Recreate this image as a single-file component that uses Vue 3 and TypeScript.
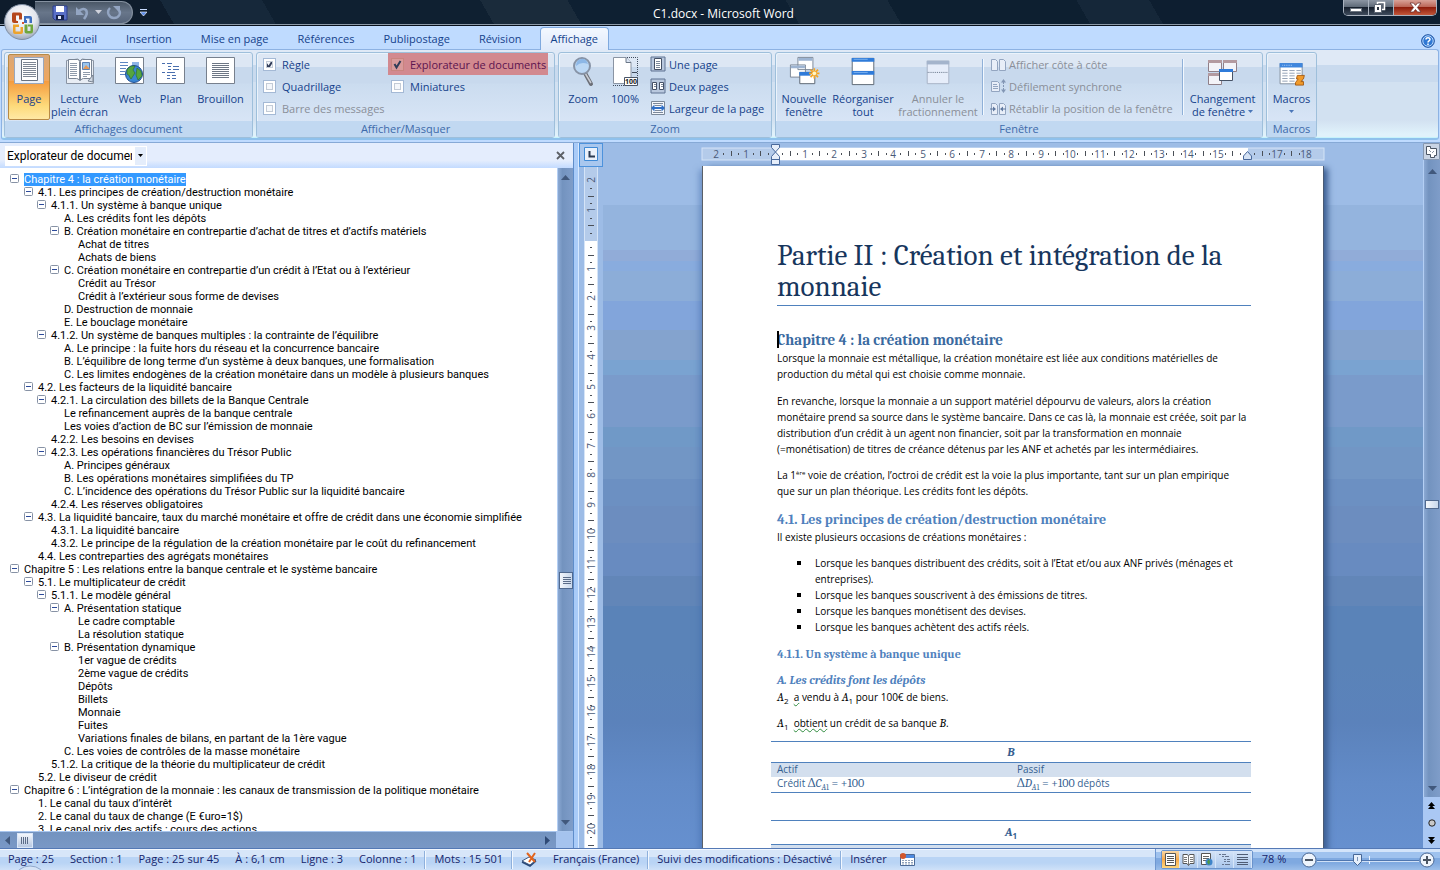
<script setup lang="ts">
import { ref } from 'vue'

interface Heading { level: number; text: string; open?: boolean }

const tabs = ['Accueil', 'Insertion', 'Mise en page', 'Références', 'Publipostage', 'Révision', 'Affichage']
const activeTab = ref('Affichage')
const selected = ref(0)
const zoom = ref(39)
const showRuler = ref(true)
const showGrid = ref(false)
const showMap = ref(true)
const showThumbs = ref(false)

const h = (level: number, text: string, open = false): Heading => ({ level, text, open })
const headings: Heading[] = [
  h(0, 'Chapitre 4 : la création monétaire', true),
  h(1, '4.1. Les principes de création/destruction monétaire', true),
  h(2, '4.1.1. Un système à banque unique', true),
  h(3, 'A. Les crédits font les dépôts'),
  h(3, 'B. Création monétaire en contrepartie d’achat de titres et d’actifs matériels', true),
  h(4, 'Achat de titres'),
  h(4, 'Achats de biens'),
  h(3, 'C. Création monétaire en contrepartie d’un crédit à l’Etat ou à l’extérieur', true),
  h(4, 'Crédit au Trésor'),
  h(4, 'Crédit à l’extérieur sous forme de devises'),
  h(3, 'D. Destruction de monnaie'),
  h(3, 'E. Le bouclage monétaire'),
  h(2, '4.1.2. Un système de banques multiples : la contrainte de l’équilibre', true),
  h(3, 'A. Le principe : la fuite hors du réseau et la concurrence bancaire'),
  h(3, 'B. L’équilibre de long terme d’un système à deux banques, une formalisation'),
  h(3, 'C. Les limites endogènes de la création monétaire dans un modèle à plusieurs banques'),
  h(1, '4.2. Les facteurs de la liquidité bancaire', true),
  h(2, '4.2.1. La circulation des billets de la Banque Centrale', true),
  h(3, 'Le refinancement auprès de la banque centrale'),
  h(3, 'Les voies d’action de BC sur l’émission de monnaie'),
  h(2, '4.2.2. Les besoins en devises'),
  h(2, '4.2.3. Les opérations financières du Trésor Public', true),
  h(3, 'A. Principes généraux'),
  h(3, 'B. Les opérations monétaires simplifiées du TP'),
  h(3, 'C. L’incidence des opérations du Trésor Public sur la liquidité bancaire'),
  h(2, '4.2.4. Les réserves obligatoires'),
  h(1, '4.3. La liquidité bancaire, taux du marché monétaire et offre de crédit dans une économie simplifiée', true),
  h(2, '4.3.1. La liquidité bancaire'),
  h(2, '4.3.2. Le principe de la régulation de la création monétaire par le coût du refinancement'),
  h(1, '4.4. Les contreparties des agrégats monétaires'),
  h(0, 'Chapitre 5 : Les relations entre la banque centrale et le système bancaire', true),
  h(1, '5.1. Le multiplicateur de crédit', true),
  h(2, '5.1.1. Le modèle général', true),
  h(3, 'A. Présentation statique', true),
  h(4, 'Le cadre comptable'),
  h(4, 'La résolution statique'),
  h(3, 'B. Présentation dynamique', true),
  h(4, '1er vague de crédits'),
  h(4, '2ème vague de crédits'),
  h(4, 'Dépôts'),
  h(4, 'Billets'),
  h(4, 'Monnaie'),
  h(4, 'Fuites'),
  h(4, 'Variations finales de bilans, en partant de la 1ère vague'),
  h(3, 'C. Les voies de contrôles de la masse monétaire'),
  h(2, '5.1.2. La critique de la théorie du multiplicateur de crédit'),
  h(1, '5.2. Le diviseur de crédit'),
  h(0, 'Chapitre 6 : L’intégration de la monnaie : les canaux de transmission de la politique monétaire', true),
  h(1, '1. Le canal du taux d’intérêt'),
  h(1, '2. Le canal du taux de change (E €uro=1$)'),
  h(1, '3. Le canal prix des actifs : cours des actions'),
]

const CM = 29.5
const hNumbers = [-2, -1, 1, 2, 3, 4, 5, 6, 7, 8, 9, 10, 11, 12, 13, 14, 15, 17, 18]
const hCells = Array.from({ length: 20 }, (_, i) => i - 2)
const vNumbers = [-2, -1, ...Array.from({ length: 20 }, (_, i) => i + 1)]
const vCells = Array.from({ length: 23 }, (_, i) => i - 2)
const hx = (n: number) => Math.round(74 + n * CM)
const vy = (n: number) => Math.round(73 + n * CM)
</script>

<template>
  <div class="word">
    <header class="titlebar">
      <div class="qat">
        <button aria-label="Enregistrer"><svg width="16" height="16" viewBox="0 0 16 16"><path d="M1 1h14v14H3l-2-2z" fill="#5a70c8" stroke="#2b3c88" /><path d="M4 1h8v6H4z" fill="#fff" /><path d="M4 10h8v5H4z" fill="#16224d" /><path d="M6 11h3v3H6z" fill="#e8eefc" /></svg></button>
        <button aria-label="Annuler"><svg width="16" height="16" viewBox="0 0 16 16"><path d="M4 6c6-5 11 0 5 8" fill="none" stroke="#93a5c2" stroke-width="2.600" /><path d="M1 2v8h8z" fill="#93a5c2" /></svg></button>
        <button class="slim" aria-label="Liste annuler"><svg width="7" height="5"><path d="M0 0h7L3.500 4z" fill="#cfd2dc" /></svg></button>
        <button aria-label="Rétablir"><svg width="16" height="16" viewBox="0 0 16 16"><path d="M4 3c-4 4-1 10 4 10s8-5 4-9" fill="none" stroke="#93a5c2" stroke-width="2.400" /><path d="M7 1h7v7z" fill="#93a5c2" /></svg></button>
      </div>
      <button class="customize" aria-label="Personnaliser"><svg width="7" height="8"><path d="M0 .5h7" stroke="#c9dcff" /><path d="M0 3h7L3.500 7z" fill="#5a8be8" stroke="#fff" stroke-width=".6" /></svg></button>
      <h1>C1.docx - Microsoft Word</h1>
      <div class="winbtns">
        <button aria-label="Réduire"><svg width="24" height="15"><rect x="6.500" y="8.500" width="11" height="3" fill="#fff" stroke="#6c7580" /></svg></button>
        <button aria-label="Restaurer"><svg width="24" height="15"><path d="M8.500 2.500h7v7h-7z" fill="#5b6572" stroke="#fff" stroke-width="1.500" /><path d="M5.500 4.500h7v8h-7z" fill="#fff" stroke="#5b6572" /><path d="M8 7h2v3H8z" fill="#2b3542" /></svg></button>
        <button class="close" aria-label="Fermer"><svg width="42" height="15"><path d="M16 3h3.500l2 2.400L23.500 3H27l-3.600 4.500L27 12h-3.500l-2-2.500-2 2.500H16l3.600-4.500z" fill="#fff" stroke="#6b3333" stroke-width=".8" /></svg></button>
      </div>
    </header>

    <button class="orb" aria-label="Bouton Office">
      <svg width="38" height="38" viewBox="0 0 38 38">
        <defs><radialGradient id="orbg" cx=".5" cy=".35" r=".65"><stop offset="0" stop-color="#fff" /><stop offset=".6" stop-color="#e3e6ee" /><stop offset="1" stop-color="#9fa9ba" /></radialGradient></defs>
        <circle cx="19" cy="19" r="17.500" fill="url(#orbg)" stroke="#7e8da3" />
        <path d="M10 9.500h7q2 0 2 2v5h-3v-4h-3v4.500q0 1 1 1h1V20h-4q-2 0-2-2v-6.500q0-2 1-2z" fill="#b5461c" />
        <path d="M21 13h6q2 0 2 2v5h-2.500v-4.500H23V18h-2z" fill="#3d6fc0" /><path d="M21 17h3v3h-3z" fill="#3d6fc0" />
        <path d="M10 21.500h6v2.500h-3.500v4.500h5V24H20v5q0 2-2 2h-6q-2 0-2-2z" fill="#eda32c" />
        <path d="M21.500 21.500h3V28h3v-4.500H25v-2h5V28q0 2.500-2 2.500h-4.500q-2 0-2-2z" fill="#6fa63c" />
        <path d="M19 19h2v2h-2z" fill="#d9542b" />
      </svg>
    </button>

    <nav class="tabs">
      <button v-for="t in tabs" :key="t" :class="{ active: t === activeTab }" @click="activeTab = t">{{ t }}</button>
      <button class="help" aria-label="Aide"><svg width="14" height="14" viewBox="0 0 14 14"><circle cx="7" cy="7" r="6.300" fill="#2f78d4" stroke="#1c4f9c" /><circle cx="7" cy="7" r="5.200" fill="none" stroke="#b9d8fb" /><path d="M5 5.400c0-2.400 4-2.300 4 0C9 7 7 6.800 7 8.400M7 9.600V11" fill="none" stroke="#fff" stroke-width="1.500" /></svg></button>
    </nav>

    <section class="ribbon">
      <div class="group views">
        <div class="tools">
          <button class="big on b42">
            <svg width="32" height="30" viewBox="0 0 32 30"><path d="M1.500 1.500h29v26h-29z" fill="#eef2f9" stroke="#99a7bd" /><path d="M8.500 3.500h16v21h-16z" fill="#fff" stroke="#69727f" /><path d="M10 7h13M10 9h13M10 11h13M10 13h13M10 15h13M10 17h13M10 19h13M10 21h13" stroke="#7d8694" transform="translate(0 -.5)" /></svg>
            <span>Page</span></button>
          <button class="big b60">
            <svg width="32" height="30" viewBox="0 0 32 30"><path d="M2.500 4.500 14 3l2 2 2-2 11.500 1.500v23H2.500z" fill="#e8edf4" stroke="#8a94a3" /><path d="M4.500 3.500h9q2 0 2 2v19q-1-2-3-2h-8zM27.500 3.500h-9q-2 0-2 2v19q1-2 3-2h8z" fill="#fff" stroke="#7a8594" /><path d="M6 7.500h7M6 9.500h7M6 11.500h7M6 13.500h7M6 15.500h7M6 17.500h7M6 19.500h7M19 16.500h7M19 18.500h7M19 20.500h4" stroke="#8f9bab" /><path d="M18.500 6.500h7v7h-7z" fill="#9ac6ef" stroke="#5d83b5" /><path d="M19 13l3-4 4 4z" fill="#e39a5a" /><path d="M24 25l5-6v7z" fill="#cfd7e2" stroke="#7a8594" /></svg>
            <span>Lecture<br>plein écran</span></button>
          <button class="big b42">
            <svg width="32" height="30" viewBox="0 0 32 30"><path d="M1.500 1.500h28v26h-28z" fill="#fff" stroke="#77808d" /><path d="M6 6.500h8M6 9.500h8M6 12.500h6M6 15.500h5M6 18.500h5" stroke="#5d86c2" /><path d="M18 6h7v7h-7z" fill="#8fb4e6" /><circle cx="20" cy="18" r="8.500" fill="#3a86d2" stroke="#1f4d93" /><path d="M13 14c3-5 6-4 8-4l-2 4 2 3-4 6c-2-2-1-4-4-5zM23 12l4 3 1 5-4 4-2-5z" fill="#55a53f" stroke="#286b26" stroke-width=".6" /></svg>
            <span>Web</span></button>
          <button class="big b40">
            <svg width="32" height="30" viewBox="0 0 32 30"><path d="M1.500 1.500h28v26h-28z" fill="#fff" stroke="#77808d" /><path d="M7 7.500h3M12 7.500h5M13 10.500h3M18 10.500h6M13 13.500h3M18 13.500h6M7 16.500h3M12 16.500h8M12 19.500h3M17 19.500h4M12 22.500h3M17 22.500h4" stroke="#4a6fae" /></svg>
            <span>Plan</span></button>
          <button class="big b60">
            <svg width="32" height="30" viewBox="0 0 32 30"><path d="M1.500 1.500h28v26h-28z" fill="#fff" stroke="#77808d" /><path d="M7 7.500h17M7 9.500h17M7 11.500h17M7 13.500h17M7 15.500h17M7 17.500h17M7 19.500h17M7 21.500h17" stroke="#6d7684" /></svg>
            <span>Brouillon</span></button>
        </div>
        <h2>Affichages document</h2>
      </div>

      <div class="group show">
        <div class="tools checks">
          <div>
            <label><input v-model="showRuler" type="checkbox">Règle</label>
            <label><input v-model="showGrid" type="checkbox">Quadrillage</label>
            <label class="off"><input type="checkbox" disabled>Barre des messages</label>
          </div>
          <div>
            <label class="marked"><input v-model="showMap" type="checkbox">Explorateur de documents</label>
            <label><input v-model="showThumbs" type="checkbox">Miniatures</label>
          </div>
        </div>
        <h2>Afficher/Masquer</h2>
      </div>

      <div class="group zoomgrp">
        <div class="tools">
          <button class="big b42">
            <svg width="32" height="30" viewBox="0 0 32 30"><path d="M18 17l6 11" stroke="#6c6f77" stroke-width="4" stroke-linecap="round" /><path d="M18 17l6 10" stroke="#c9ccd3" stroke-width="1.500" /><circle cx="15" cy="10" r="8" fill="#bcd8f5" stroke="#8793a6" stroke-width="2" /><path d="M9 10q5-5 12-2-2-6-7-5-5 1-5 7z" fill="#8db7e6" /></svg>
            <span>Zoom</span></button>
          <button class="big b42">
            <svg width="32" height="30" viewBox="0 0 32 30"><path d="M4.500 1.500H17l5 5v21H4.500z" fill="#fff" stroke="#8a94a3" /><path d="M17 1.500v5h5" fill="#dbe5f3" stroke="#6b7787" /><path d="M18 1.500h10.500V22M4 29.500h12" fill="none" stroke="#3f4b5c" stroke-dasharray="1 1" /><path d="M23 16.500h5" stroke="#3f4b5c" /><path d="M15.500 21.500h13v8h-13z" fill="#fff" stroke="#4a5566" /><text x="16" y="28" class="tiny">100</text></svg>
            <span>100%</span></button>
          <div class="rows">
            <button><svg width="16" height="16"><path d="M1 1h14v14H1z" fill="#b9c8de" stroke="#5f7392" /><path d="M4.500 2.500h7v11h-7z" fill="#fff" stroke="#445066" /><path d="M6 5.500h4M6 7.500h4M6 9.500h4M6 11.500h4" stroke="#7c889a" /></svg>Une page</button>
            <button><svg width="16" height="16"><path d="M1 1h14v14H1z" fill="#b9c8de" stroke="#5f7392" /><path d="M2.500 4.500h4v7h-4zM9.500 4.500h4v7h-4z" fill="#fff" stroke="#445066" /><path d="M4 6.500h2M4 8.500h2M11 6.500h2M11 8.500h2" stroke="#7c889a" /></svg>Deux pages</button>
            <button><svg width="16" height="16"><path d="M1.500 1.500h13v13h-13z" fill="#f4f7fc" stroke="#7b8899" /><path d="M3 3.500h10M3 12.500h10M5 5.500h6M5 10.500h6" stroke="#7c889a" /><path d="M1 8l3.500-3.500v2.500h7V4.500L15 8l-3.500 3.500V9h-7v2.500z" fill="#2f6fc7" /></svg>Largeur de la page</button>
          </div>
        </div>
        <h2>Zoom</h2>
      </div>

      <div class="group window">
        <div class="tools">
          <button class="big b56">
            <svg width="34" height="32" viewBox="0 0 34 32"><path d="M10.500 1.500h16v13h-16zM2.500 9.500h16v13h-16z" fill="#fff" stroke="#7a8594" /><path d="M11 2h15v3H11zM3 10h15v3H3z" fill="#9db4d2" /><path d="M12.500 17.500h16v12h-16z" fill="#fff" stroke="#59636f" /><path d="M12 17h12v4H12z" fill="#2f7bd9" /><path d="M28 13v11M22.500 18.500h11M24 14.500l8 8M32 14.500l-8 8" stroke="#f5a623" stroke-width="1.800" /><circle cx="28" cy="18.500" r="2" fill="#fff6c8" /></svg>
            <span>Nouvelle<br>fenêtre</span></button>
          <button class="big b62">
            <svg width="32" height="32" viewBox="0 0 32 32"><path d="M4.500 2.500h23v14h-23zM4.500 16.500h23v14h-23z" fill="#fff" stroke="#59636f" /><path d="M4 2h24v4H4zM4 16h24v4H4z" fill="#2f7bd9" /><path d="M6 3.500h15M6 17.500h15" stroke="#7fb4f0" /></svg>
            <span>Réorganiser<br>tout</span></button>
          <button class="big b88 off" disabled>
            <svg width="32" height="32" viewBox="0 0 32 32"><path d="M4.500 5.500h23v24h-23z" fill="#e6edfa" stroke="#a6b1c4" /><path d="M4 5h24v4H4z" fill="#a4b4cc" /><path d="M5 17.500h22" stroke="#5f6d82" stroke-dasharray="1 1" /></svg>
            <span>Annuler le<br>fractionnement</span></button>
          <i class="sep" />
          <div class="rows off">
            <button disabled><svg width="16" height="16"><path d="M1.500 3.500h4l2 2v9h-6zM9.500 3.500h4l2 2v9h-6z" fill="#e8eef8" stroke="#93a5c0" /></svg>Afficher côte à côte</button>
            <button disabled><svg width="16" height="16"><path d="M1.500 3.500h6l2 2v8h-8z" fill="#e8eef8" stroke="#93a5c0" /><path d="M3 6.500h4M3 8.500h5M3 10.500h5" stroke="#93a5c0" /><path d="M13.500 4v8" stroke="#8296b4" stroke-dasharray="2 1" /><path d="M11 4.500 13.500 1 16 4.500zM11 11.500l2.500 3.500 2.500-3.500z" fill="#8296b4" /></svg>Défilement synchrone</button>
            <button disabled><svg width="16" height="16"><path d="M1.500 3.500h4l2 2v9h-6zM9.500 3.500h4l2 2v9h-6z" fill="#e8eef8" stroke="#93a5c0" /><path d="M0 9h4M12 9h4" stroke="#5f789f" /><path d="M3 6.500 6 9l-3 2.500zM13 6.500 10 9l3 2.500z" fill="#5f789f" /></svg>Rétablir la position de la fenêtre</button>
          </div>
          <i class="sep" />
          <button class="big b76">
            <svg width="32" height="30" viewBox="0 0 32 30"><path d="M1.500 4.500h13v11h-13zM16.500 4.500h13v11h-13zM1.500 17.500h13v11h-13z" fill="#f3f3f8" stroke="#8f7f88" /><path d="M1 4h14v3H1zM16 4h14v3H16zM1 17h14v3H1z" fill="#b39aa0" /><path d="M12.500 13.500h13v11h-13z" fill="#fff" stroke="#475366" /><path d="M12 13h14v3H12z" fill="#2f7bd9" /></svg>
            <span>Changement<br>de fenêtre <svg width="5" height="8"><path d="M0 2h5L2.500 5z" fill="#4a76b8" /></svg></span></button>
        </div>
        <h2>Fenêtre</h2>
      </div>

      <div class="group macros">
        <div class="tools">
          <button class="big b48">
            <svg width="32" height="34" viewBox="0 0 32 34"><path d="M2.500 8.500h25v23h-25z" fill="#fff" stroke="#7a8594" /><path d="M2 8h26v5H2z" fill="#3f86dd" /><path d="M5 10.500h12" stroke="#b8d5f7" stroke-dasharray="1 1" /><path d="M5 16.500h6M13 16.500h6M21 16.500h5M5 19.500h6M13 19.500h6M21 19.500h5M5 22.500h6M13 22.500h6M5 25.500h6M13 25.500h6M5 28.500h6M13 28.500h6" stroke="#8797ae" /><path d="M22 22h8l-1 4-3 3h3v4h-9v-3l3-4h-2z" fill="#f09a2b" stroke="#a3560d" /></svg>
            <span>Macros<br><svg width="5" height="8"><path d="M0 2h5L2.500 5z" fill="#4a76b8" /></svg></span></button>
        </div>
        <h2>Macros</h2>
      </div>
    </section>

    <main class="work">
      <aside class="map">
        <div class="maphead">
          <div class="pick">
            <select aria-label="Volet"><option>Explorateur de documents</option></select>
            <svg width="5" height="3"><path d="M0 0h5L2.500 3z" fill="#000" /></svg>
          </div>
          <button aria-label="Fermer le volet"><svg width="9" height="9"><path d="M1 1l7 7M8 1L1 8" stroke="#5c6066" stroke-width="1.800" /></svg></button>
        </div>
        <div class="mapbody">
          <ul>
            <li v-for="(n, i) in headings" :key="i" :class="['l' + n.level, { sel: i === selected }]">
              <span class="twig"><svg v-if="n.open" width="9" height="9"><rect x=".5" y=".5" width="8" height="8" rx="1" fill="#fff" stroke="#8792a5" /><path d="M2 4.500h5" stroke="#2c4a9b" /></svg></span>
              <button @click="selected = i">{{ n.text }}</button>
            </li>
          </ul>
          <div class="vbar left">
            <svg width="9" height="5"><path d="M0 5h9L4.500 0z" fill="#41587c" /></svg>
            <i class="g386" /><b><svg width="14" height="15"><path d="M3 4.500h8M3 6.500h8M3 8.500h8M3 10.500h8" stroke="#5b6c88" /></svg></b><i class="g226" />
            <svg width="9" height="5"><path d="M0 0h9L4.500 5z" fill="#41587c" /></svg>
          </div>
        </div>
        <div class="hbar">
          <div class="track">
            <svg width="5" height="9"><path d="M5 0v9L0 4.500z" fill="#41587c" /></svg>
            <b><svg width="14" height="13"><path d="M3.500 3v7M5.500 3v7M7.500 3v7M9.500 3v7" stroke="#5b6c88" /></svg></b>
            <i />
            <svg width="5" height="9"><path d="M0 0v9l5-4.500z" fill="#2f4a75" /></svg>
          </div>
        </div>
      </aside>

      <div class="vruler">
        <button class="tabsel" aria-label="Tabulation"><svg width="24" height="24"><path d="M5.500 4.500h13v13h-13z" fill="#eaf1fb" stroke="#3f8ad6" /><path d="M10.500 8v5.500H16" fill="none" stroke="#2a3a52" stroke-width="2" /></svg></button>
        <svg class="vr" width="14" height="700">
          <rect width="14" height="700" fill="#fff" /><rect width="14" height="74" fill="#b4cbea" /><path d="M.5 0v700M13.500 0v700" stroke="#d5e4f7" />
          <g v-for="n in vCells" :key="n"><path :d="`M6 ${vy(n + 0.25)}.5h2M4 ${vy(n + 0.5)}.5h6M6 ${vy(n + 0.75)}.5h2`" stroke="#4a4f57" /></g>
          <text v-for="n in vNumbers" :key="n" :transform="`translate(11 ${vy(n) - 1}) rotate(-90)`">{{ Math.abs(n) }}</text>
        </svg>
      </div>

      <div class="canvas">
        <div class="hruler">
          <svg width="624" height="22">
            <rect x="1" y="5" width="622" height="12" fill="#b4cbea" stroke="#d5e4f7" /><rect x="74" y="5" width="473" height="12" fill="#fff" />
            <g v-for="n in hCells" :key="n"><path :d="`M${hx(n + 0.25)}.5 10v2M${hx(n + 0.5)}.5 8v5M${hx(n + 0.75)}.5 10v2`" stroke="#4a4f57" /></g>
            <text v-for="n in hNumbers" :key="n" :x="hx(n)" y="15">{{ Math.abs(n) }}</text>
            <path d="M70.500 1.500h8v3l-4 4.500 4 4.500v8h-8v-8l4-4.500-4-4.500z" fill="#e6eefa" stroke="#49699c" /><path d="M71 16.500h7" stroke="#49699c" />
            <path d="M542.500 16.500v-3.500l4-4.500 4 4.500v3.500z" fill="#d5e2f4" stroke="#49699c" />
          </svg>
        </div>
        <article class="page">
          <h2 class="doctitle">Partie II : Création et intégration de la<br>monnaie</h2>
          <h3 class="chap"><i class="caret" />Chapitre 4 : la création monétaire</h3>
          <p>Lorsque la monnaie est métallique, la création monétaire est liée aux conditions matérielles de<br>production du métal qui est choisie comme monnaie.</p>
          <p>En revanche, lorsque la monnaie a un support matériel dépourvu de valeurs, alors la création<br>monétaire prend sa source dans le système bancaire. Dans ce cas là, la monnaie est créée, soit par la<br>distribution d’un crédit à un agent non financier, soit par la transformation en monnaie<br>(=monétisation) de titres de créance détenus par les ANF et achetés par les intermédiaires.</p>
          <p>La 1<sup>ère</sup> voie de création, l’octroi de crédit est la voie la plus importante, tant sur un plan empirique<br>que sur un plan théorique. Les crédits font les dépôts.</p>
          <h4>4.1. Les principes de création/destruction monétaire</h4>
          <p>Il existe plusieurs occasions de créations monétaires :</p>
          <ul>
            <li>Lorsque les banques distribuent des crédits, soit à l’Etat et/ou aux ANF privés (ménages et<br>entreprises).</li>
            <li>Lorsque les banques souscrivent à des émissions de titres.</li>
            <li>Lorsque les banques monétisent des devises.</li>
            <li>Lorsque les banques achètent des actifs réels.</li>
          </ul>
          <h5>4.1.1. Un système à banque unique</h5>
          <h6>A. Les crédits font les dépôts</h6>
          <p><var>A</var><sub>2</sub>&nbsp; <u>a</u> vendu à <var>A</var><sub>1</sub> pour 100€ de biens.</p>
          <p><var>A</var><sub>1</sub>&nbsp; <u>obtient</u> un crédit de sa banque <var>B</var>.</p>
          <table>
            <tbody>
              <tr class="name"><th colspan="2"><var>B</var></th></tr>
              <tr class="band"><td>Actif</td><td>Passif</td></tr>
              <tr><td>Crédit <span class="m">Δ<var>C</var><sub><var>A</var>1</sub> = +100</span></td><td><span class="m">Δ<var>D</var><sub><var>A</var>1</sub> = +100</span> dépôts</td></tr>
            </tbody>
          </table>
          <table class="second">
            <tbody>
              <tr class="name"><th colspan="2"><var>A</var><sub>1</sub></th></tr>
              <tr class="band"><td>&nbsp;</td><td /></tr>
            </tbody>
          </table>
        </article>
      </div>

      <div class="rightbar">
        <button aria-label="Règle"><svg width="17" height="17"><path d="M.5.5h16v16H.500z" fill="#c9d4e4" stroke="#8798b0" /><path d="M3.500 3.500h4v2h6v7h-2v2h-4v-3h-4z" fill="#fff" stroke="#4b5563" /><path d="M6 7l2 2M11 8l-2 2" stroke="#8a94a3" /></svg></button>
        <div class="vbar">
          <svg width="9" height="5"><path d="M0 5h9L4.500 0z" fill="#41587c" /></svg>
          <i class="g323" /><b class="short" /><i class="g276" />
          <svg width="9" height="5"><path d="M0 0h9L4.500 5z" fill="#41587c" /></svg>
        </div>
        <div class="browse">
          <button aria-label="Page précédente"><svg width="7" height="8"><path d="M0 4h7L3.500 0zM0 7h7L3.500 3z" fill="#000" /></svg></button>
          <button aria-label="Sélectionner l’objet"><svg width="8" height="8"><circle cx="4" cy="4" r="3.200" fill="#c8c8c8" stroke="#222" /></svg></button>
          <button aria-label="Page suivante"><svg width="7" height="8"><path d="M0 1h7L3.500 5zM0 4h7L3.500 8z" fill="#000" /></svg></button>
        </div>
      </div>
    </main>

    <footer class="status">
      <svg class="arc" width="26" height="5"><ellipse cx="13" cy="13" rx="15" ry="12" fill="#d6e4f6" stroke="#8fa8cc" /></svg>
      <span>Page : 25</span><span>Section : 1</span><span>Page : 25 sur 45</span><span>À : 6,1 cm</span><span>Ligne : 3</span><span>Colonne : 1</span>
      <i /><span>Mots : 15 501</span><i />
      <svg width="16" height="16"><path d="M1 9l7-4 7 3-6 5z" fill="#fff" stroke="#3d567f" /><path d="M1 10l8 4 6-5" fill="none" stroke="#2c4a7a" stroke-width="1.500" /><path d="M6 1l8 9M14 1L8 10" stroke="#e2641e" stroke-width="2" /></svg>
      <span>Français (France)</span><i /><span>Suivi des modifications : Désactivé</span><i /><span>Insérer</span>
      <svg class="rec" width="16" height="15"><path d="M1.500 2.500h14v11h-14z" fill="#fff" stroke="#4c6a97" /><path d="M2 3h13v3H2z" fill="#4d8ae0" /><path d="M3 8.500h11M3 10.500h11M3 12h11" stroke="#8fa1bb" stroke-dasharray="2 1" /><circle cx="4" cy="4" r="3" fill="#d2572c" /></svg>
      <div class="right">
        <div class="modes">
          <button class="on" aria-label="Page"><svg width="13" height="13"><path d="M1.500.5h10v12h-10z" fill="#fff" stroke="#555" /><path d="M3 3.500h7M3 5.500h7M3 7.500h7M3 9.500h7" stroke="#555" /></svg></button>
          <button aria-label="Lecture plein écran"><svg width="13" height="13"><path d="M1 1.500h4l1.500 1L8 1.500h4v9H8l-1.500 2-1.500-2H1z" fill="#fff" stroke="#555" /><path d="M6.500 2v10M2 4.500h3M2 6.500h3M8 4.500h3M8 6.500h3M2 8.500h3M8 8.500h3" stroke="#777" /></svg></button>
          <button aria-label="Web"><svg width="13" height="13"><path d="M1.500.5h9v11h-9z" fill="#fff" stroke="#555" /><path d="M3 3.500h6M3 5.500h6M3 7.500h3" stroke="#666" /><circle cx="9" cy="9" r="3.500" fill="#3f84c9" /><path d="M7 9l2-3 1 3-1 3z" fill="#4d9a43" /></svg></button>
          <button aria-label="Plan"><svg width="13" height="13"><path d="M1 1.500h2M4 1.500h4M4 3.500h2M7 3.500h4M6 6.500h2M9 6.500h3M6 8.500h2M9 8.500h3M4 11.500h2M7 11.500h5" stroke="#66758f" /></svg></button>
          <button aria-label="Brouillon"><svg width="13" height="13"><path d="M1 1.500h11M1 4.500h11M1 6.500h11M1 9.500h11M1 11.500h11" stroke="#4f5d75" /></svg></button>
        </div>
        <button class="pct">78 %</button>
        <button class="rnd" aria-label="Zoom arrière"><svg width="16" height="16"><circle cx="8" cy="8" r="7" fill="#eef4fc" stroke="#4a6793" /><path d="M4 8h8" stroke="#4b5563" stroke-width="2" /></svg></button>
        <input v-model="zoom" type="range" min="0" max="100" aria-label="Zoom">
        <button class="rnd" aria-label="Zoom avant"><svg width="16" height="16"><circle cx="8" cy="8" r="7" fill="#eef4fc" stroke="#4a6793" /><path d="M4 8h8M8 4v8" stroke="#4b5563" stroke-width="2" /></svg></button>
      </div>
    </footer>
  </div>
</template>

<style>
html, body { margin: 0; overflow: hidden; }
</style>

<style scoped>
* { box-sizing: border-box; }
.word { position: relative; display: flex; flex-direction: column; height: 100vh; background: #bfdbff; font-family: "Open Sans", "Noto Sans", sans-serif; font-size: 11px; color: #15428b; }
button { margin: 0; padding: 0; border: 0; background: none; font: inherit; color: inherit; }
svg { display: block; flex: none; }
h1, h2, h3, h4, h5, h6, p, ul { margin: 0; padding: 0; }

.titlebar { flex: none; display: flex; height: 26px; padding-left: 35px; background: linear-gradient(60deg, #0e1c2c 0 12%, #16283a 12% 19%, #0f2031 19% 34%, #1a2b3b 34% 40%, #0e2032 40% 55%, #17293a 55% 62%, #0d1f30 62% 75%, #152739 75% 80%, #0d1e30 80%); border-bottom: 1px solid #07101c; box-shadow: inset 0 -1px #8c9aa8; color: #fff; }
.qat { display: flex; align-items: center; gap: 7px; width: 98px; height: 23px; margin-top: 1px; padding-left: 17px; border: 1px solid #8591a0; border-left: 0; border-radius: 0 12px 12px 0; background: linear-gradient(#4b5867, #68768a 50%, #56647a); }
.qat .slim { margin: 0 -3px; }
.customize { width: 20px; padding-left: 7px; margin-top: 1px; }
.titlebar h1 { flex: 1; font-size: 12px; font-weight: 400; line-height: 27px; text-align: center; padding-right: 49px; }
.winbtns { display: flex; align-items: flex-start; height: 16px; margin-right: 3px; border: 1px solid #aab3bf; border-top: 0; border-radius: 0 0 5px 5px; overflow: hidden; }
.winbtns button { background: linear-gradient(#8c96a3, #5a6674 50%, #16202d 50%, #3f4c5d); border-right: 1px solid #aab3bf; }
.winbtns .close { border: 0; background: linear-gradient(#d9a298, #b85f50 50%, #8f1d0c 50%, #c2573a); }
.orb { position: absolute; left: 3px; top: 3px; }

.tabs { flex: none; display: flex; gap: 7px; height: 23px; padding: 1px 4px 0 50px; }
.tabs button { padding: 0 10px; height: 23px; line-height: 22px; border: 1px solid transparent; border-bottom: 0; border-radius: 4px 4px 0 0; }
.tabs .active { position: relative; background: linear-gradient(#f3f8ff, #e0eafa); border-color: #7fa9de; }
.tabs .help { margin-left: auto; padding: 3px 0 0; }

.ribbon { flex: none; display: flex; gap: 3px; height: 91px; margin: 0 1px; padding: 2px; border: 1px solid #8db2e3; border-bottom: 2px solid #8fc1ec; border-radius: 3px; background: linear-gradient(#dfe9f6 0 15px, #c9daee 15px 32px, #d2e1f1 32px 70px, #e0f2fb 84px); box-shadow: inset 0 -1px #c6f3fb; }
.group { display: flex; flex-direction: column; height: 86px; border: 1px solid #9ebfdb; border-radius: 3px; background: linear-gradient(#dde7f4 0 14px, #c8d9ed 14px 30px, #cbdcef 31px, #d8e5f6 70px); box-shadow: inset 1px 1px #ebf3fb; }
.tools { display: flex; flex: 1; padding: 0 1px 0 3px; }
.group h2 { height: 16px; line-height: 15px; font-size: 11px; font-weight: 400; text-align: center; color: #3e6aaa; background: #c1d8f1; white-space: nowrap; }
.views { width: 249px; }
.show { width: 299px; }
.zoomgrp { width: 214px; }
.window { width: 488px; }
.macros { width: 51px; }
.macros .tools, .window .tools { padding: 0; }
.big { flex: none; display: flex; flex-direction: column; align-items: center; height: 66px; margin-top: 1px; padding-top: 2px; line-height: 13px; white-space: nowrap; }
.big > svg { height: 30px; overflow: visible; }
.big > span { margin-top: 6px; text-align: center; }
.big span svg { display: inline-block; vertical-align: 0; }
.big.on { border: 1px solid #b88a45; border-radius: 2px; padding-top: 1px; background: linear-gradient(#d9a778, #f0a75e 40%, #f49b3f 41%, #fddb7c 80%, #ffe9a4); }
.b40 { width: 40px; } .b42 { width: 42px; } .b48 { width: 49px; } .b56 { width: 56px; } .b60 { width: 59px; } .b62 { width: 62px; } .b76 { width: 74px; } .b88 { width: 88px; }
.off, .off button, button.off { color: #8a8f99; }
.tiny { font: bold 7px "Open Sans", sans-serif; fill: #222; }
.rows { display: flex; flex-direction: column; padding-left: 4px; }
.rows button { display: flex; align-items: center; gap: 3px; height: 22px; white-space: nowrap; }
.window .rows { padding: 0 9px 0 4px; }
.sep { flex: none; width: 2px; height: 56px; margin: 6px 2px 0 0; border-left: 1px solid #8fb0d8; background: #f2f8ff; }
.checks { padding: 0 3px 0 6px; }
.checks > div { width: 125px; }
.checks > div + div { width: 160px; }
.checks label { display: flex; align-items: center; height: 22px; gap: 6px; white-space: nowrap; }
.checks > div + div label { padding-left: 3px; }
.checks .marked { background: #d2898f; color: #5c1450; }
.checks input { appearance: none; width: 13px; height: 13px; margin: 0; border: 1px solid #a4b9d5; background: #f4f7fb; box-shadow: inset 0 0 0 2px #fff, inset 0 0 0 3px #c3cbd6; }
.checks input:checked { background: #f4f7fb url("data:image/svg+xml,%3Csvg xmlns='http://www.w3.org/2000/svg' width='11' height='11'%3E%3Cpath d='M2.500 5l2 3.500L8.500 2' fill='none' stroke='%23303c58' stroke-width='2'/%3E%3C/svg%3E"); }
.checks .marked input { border-color: #c9847f; background-color: #d99a9b; box-shadow: none; }

.work { flex: 1; min-height: 0; display: flex; margin-top: 2px; border-top: 1px solid #86a9d6; background: #a3c4ee; }
.map { flex: none; width: 574px; display: flex; flex-direction: column; border-right: 1px solid #5f8dca; }
.maphead { flex: none; display: flex; align-items: center; height: 25px; padding: 0 8px 0 5px; background: linear-gradient(#e4edfd 0 70%, #c3dbff); }
.pick { position: relative; display: flex; align-items: center; height: 20px; width: 142px; background: #fff; }
.pick select { appearance: none; width: 127px; height: 20px; padding: 0 0 0 2px; border: 0; background: #fff; font: 12px Roboto, "Liberation Sans", sans-serif; color: #000; overflow: hidden; text-overflow: clip; }
.pick::after { content: ""; position: absolute; right: 1px; top: 1px; width: 11px; height: 18px; background: #e4edfb; }
.pick svg { position: absolute; right: 4px; z-index: 1; }
.maphead > button { margin-left: auto; }
.mapbody { flex: 1; min-height: 0; display: flex; background: #fff; }
.mapbody ul { flex: 1; min-width: 0; overflow: hidden; padding-top: 5px; list-style: none; font-family: Roboto, "Liberation Sans", sans-serif; color: #000; }
.mapbody li { display: flex; height: 13px; line-height: 13px; white-space: nowrap; }
.mapbody li button { height: 13px; }
.sel button { background: #3399ff; color: #fff; }
.l0 { padding-left: 10px; } .l1 { padding-left: 24px; } .l2 { padding-left: 37px; } .l3 { padding-left: 50px; } .l4 { padding-left: 64px; }
.twig { width: 14px; padding-top: 1px; }
.vbar { flex: 1; display: flex; flex-direction: column; align-items: center; width: 15px; padding: 7px 0 6px; background: linear-gradient(90deg, #8ba9d3, #7393bf 30%, #7f9dc9); border-left: 1px solid #b4cff4; }
.vbar.left { flex: none; width: 16px; }
.vbar b { width: 14px; height: 17px; border: 1px solid #50698f; background: linear-gradient(90deg, #f3f6fb, #c9d8ec); }
.vbar .short { height: 9px; }
.g386 { flex: 391 0 0; } .g226 { flex: 230 0 0; } .g323 { flex: 325 0 0; } .g276 { flex: 276 0 0; }
.hbar { flex: none; height: 17px; display: flex; padding-right: 17px; border-top: 1px solid #a9c6ee; background: #a5c3ee; }
.track { flex: 1; display: flex; align-items: center; padding: 0 6px 0 5px; background: linear-gradient(#7393bf, #7998c6); }
.track b { margin-left: 7px; width: 16px; height: 15px; border: 1px solid #d9e6f8; background: linear-gradient(#f3f6fb, #b8c9e2); }
.track i { flex: 1; }

.vruler { flex: none; width: 29px; display: flex; flex-direction: column; align-items: center; overflow: hidden; padding-left: 5px; background: linear-gradient(90deg, #a9cbf8 4px, #d6e8ff 4px 5px, #9dbce6 5px); }
.tabsel { flex: none; width: 24px; height: 24px; outline: 1px solid #4d92dc; outline-offset: -1px; background: #a9c7ee; }
.vr text, .hruler text { font: 10px "Open Sans", sans-serif; fill: #4a5a78; text-anchor: middle; }
.canvas { flex: 1; min-width: 0; overflow: hidden; background: linear-gradient(#9dbce6 0 62px, #94b4de 62px 107px, #91acd8 107px 118px, #89acde 118px 128px, #8cadd8 128px 158px, #82a5db 158px 187px, #84a3ce 187px 217px, #7aa3d1 217px 232px, #7a9bcb 232px 284px, #7099c7 284px 304px, #7296c5 304px 336px, #6c90c2 336px 363px, #6c8dbf 363px 400px, #688bc0 400px 433px, #6286b8 433px 463px, #5a83b8 463px 520px, #5b82bb 580px, #628bc8 640px, #6690cf 706px); }
.hruler { height: 23px; background: #9dbce6; display: flex; justify-content: center; }
.page { width: 620px; height: 760px; margin: 0 auto; padding: 74px 72px 0 74px; background: #fff; box-shadow: -1px 0 #5a6068, 1px 0 #4a5a74, 5px 2px 6px #3d5f93, -4px 4px 6px rgba(70, 110, 170, .5); font-size: 10px; line-height: 16px; color: #000; white-space: nowrap; }
.doctitle { padding-bottom: 3px; border-bottom: 1px solid #4f81bd; font: 29px/31px Cambria, "Noto Serif", serif; color: #17365d; }
.chap { position: relative; margin-top: 24px; font: bold 15px/20px Cambria, "Noto Serif", serif; color: #3a6a9f; }
.caret { position: absolute; left: 0; top: 1px; width: 2px; height: 17px; background: #000; }
.page p + p { margin-top: 10px; }
.page .chap + p + p { margin-top: 11px; }
.page h4 { margin-top: 11px; font: bold 14px/19px Cambria, "Noto Serif", serif; color: #4f81bd; }
.page h5 { margin-top: 10px; font: bold 12px/18px Cambria, "Noto Serif", serif; color: #4f81bd; }
.page h6 { margin-top: 8px; font: italic bold 12px/18px Cambria, "Noto Serif", serif; color: #4f81bd; }
.page sub, .page sup { font-size: 8px; line-height: 0; }
.page sup { font-size: 6px; }
.page var { font: italic 12px/1 Cambria, "Noto Serif", serif; }
.page u { text-decoration: underline wavy #2e8b3d 1px; text-decoration-skip-ink: none; }
.page ul { margin-top: 10px; padding-left: 38px; list-style: none; }
.page li { position: relative; }
.page li::before { content: ""; position: absolute; left: -18px; top: 6px; width: 4px; height: 4px; background: #000; }
.page table { width: 480px; margin: 10px 0 0 -6px; border-collapse: collapse; table-layout: fixed; border-top: 1px solid #4f81bd; border-bottom: 1px solid #4f81bd; color: #365f91; line-height: 13px; }
.page td, .page th { padding: 0 6px; height: 14px; }
.page th { height: 21px; border-bottom: 1px solid #4f81bd; }
.page th var { font-weight: bold; }
.page sub var { font-size: 8px; }
.m { font-family: Cambria, "Noto Serif", serif; font-size: 12px; line-height: 1; }
.band { background: #d3dfee; }
.page .second { margin-top: 27px; border-bottom: 0; }
.second th { height: 24px; }

.rightbar { flex: none; width: 17px; display: flex; flex-direction: column; background: #aac8f4; }
.rightbar .vbar { width: 17px; padding-top: 9px; }
.rightbar > button { height: 17px; }
.browse { display: flex; flex-direction: column; align-items: center; height: 51px; justify-content: space-around; }

.status { position: relative; flex: none; display: flex; align-items: center; height: 22px; padding-left: 8px; border-top: 1px solid #5479b5; background: linear-gradient(#f1f7ff 0 1px, #d7e6f9 1px 8px, #b9d4f5 8px 14px, #cfe1f8); white-space: nowrap; color: #15246b; }
.status > span { padding-bottom: 2px; }
.status > span + span { margin-left: 16px; }
.status > i { width: 2px; height: 18px; margin: 0 8px; border-left: 1px solid #8eb0dc; background: #f2f8ff; }
.status > svg + span { margin-left: 16px; }
.arc { position: absolute; left: 17px; bottom: 0; }
.status > .arc + span { margin-left: 0; }
.rec { margin-left: 12px; }
.right { margin-left: auto; display: flex; align-items: center; height: 21px; padding: 0 5px; border-left: 1px solid #6f97d0; background: linear-gradient(#d3e4fa 0 3px, #9fc2ee 3px 9px, #7fa9e0 9px 14px, #9dbfea); }
.modes { display: flex; height: 19px; border: 1px solid #6a93cc; border-radius: 2px; }
.modes button { width: 18px; display: grid; place-items: center; border-right: 1px solid #d5e5f9; background: linear-gradient(#d5e4f8, #a9c6ec); }
.modes .on { background: linear-gradient(#f8d8a8, #f7a94a 50%, #ffd67c); }
.pct { width: 48px; padding: 0 6px 2px 0; text-align: center; }
.right input { appearance: none; width: 102px; height: 16px; margin: 0; background: linear-gradient(#4f76b0, #4f76b0) 0 8px / 100% 1px no-repeat, linear-gradient(#e8f1fd, #e8f1fd) 52px 4px / 1px 8px no-repeat, linear-gradient(#cfe0f7, #cfe0f7) 0 9px / 100% 1px no-repeat; }
.right input::-webkit-slider-thumb { appearance: none; width: 11px; height: 14px; background: url("data:image/svg+xml,%3Csvg xmlns='http://www.w3.org/2000/svg' width='11' height='14'%3E%3Cpath d='M1.500 1.500h8v7l-4 4-4-4z' fill='%23e6effb' stroke='%23466797'/%3E%3Cpath d='M5.500 4v4' stroke='%237b93b8'/%3E%3C/svg%3E"); }
</style>
